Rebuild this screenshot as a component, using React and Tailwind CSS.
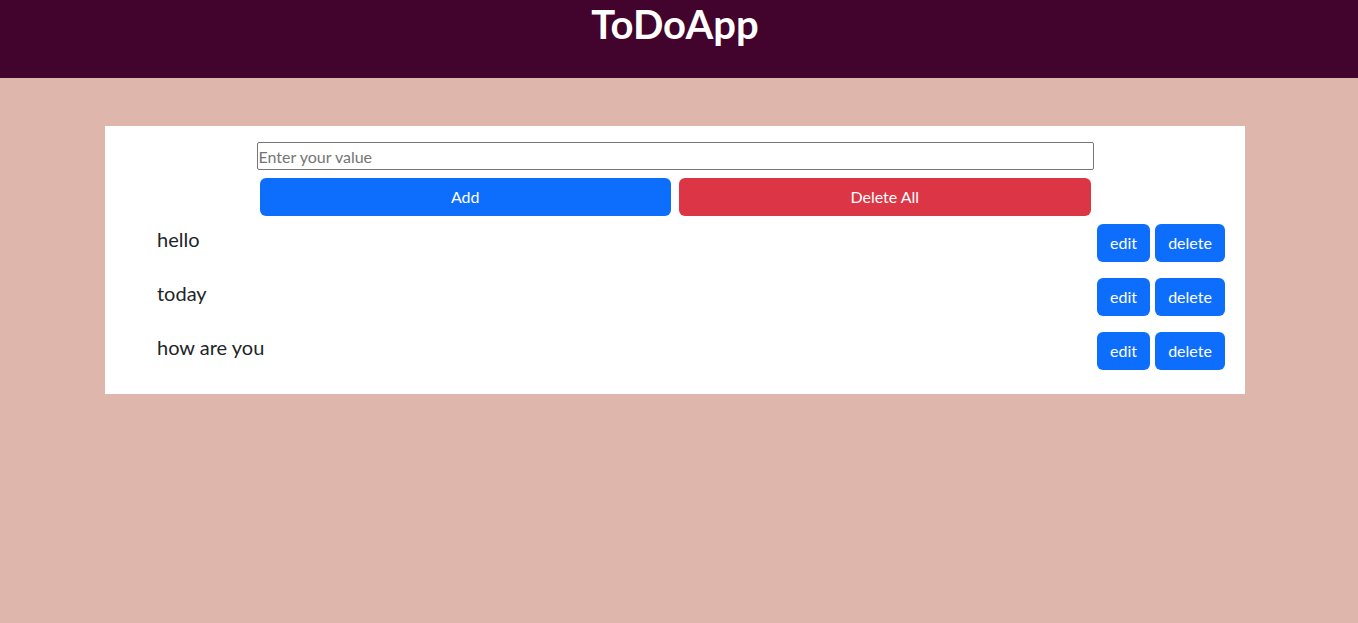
import { useState } from 'react'

export default function App() {
  const [items] = useState(['hello', 'today', 'how are you'])

  return (
    <div className="min-h-[623px] bg-[#deb6ab] font-['Lato','Liberation_Sans',sans-serif] text-[#212529]">
      {/* Header */}
      <div className="h-[78px] bg-[#42032c]">
        <div className="w-[1350px] flex justify-center">
          <h1 className="text-[40px] leading-[48px] font-bold text-white">ToDoApp</h1>
        </div>
      </div>

      <div className="w-[1350px] pt-[48px] flex justify-center">
        <div className="w-[1140px] bg-white pt-4 pb-6 flex flex-col">
          <div className="flex justify-center">
            <div className="w-[837px] flex flex-col">
              <input
                className="h-[28px] w-full border border-[#767676] rounded-[2px] px-[1px] text-base text-[#212529] placeholder:text-[#757575] outline-none"
                placeholder="Enter your value"
              />
              <div className="flex gap-2 px-[3px] mt-2">
                <button className="flex-1 h-[38px] rounded-md bg-[#0d6efd] text-white text-base">Add</button>
                <button className="flex-1 h-[38px] rounded-md bg-[#dc3545] text-white text-base">Delete All</button>
              </div>
            </div>
          </div>

          <div className="mt-2 flex flex-col gap-4">
            {items.map(item => (
              <div key={item} className="flex justify-between pl-[52px] pr-5">
                <p className="text-xl leading-[30px]">{item}</p>
                <div className="flex gap-[5px]">
                  <button className="h-[38px] w-[53px] rounded-md bg-[#0d6efd] text-white text-base">edit</button>
                  <button className="h-[38px] w-[70px] rounded-md bg-[#0d6efd] text-white text-base">delete</button>
                </div>
              </div>
            ))}
          </div>
        </div>
      </div>
    </div>
  )
}
